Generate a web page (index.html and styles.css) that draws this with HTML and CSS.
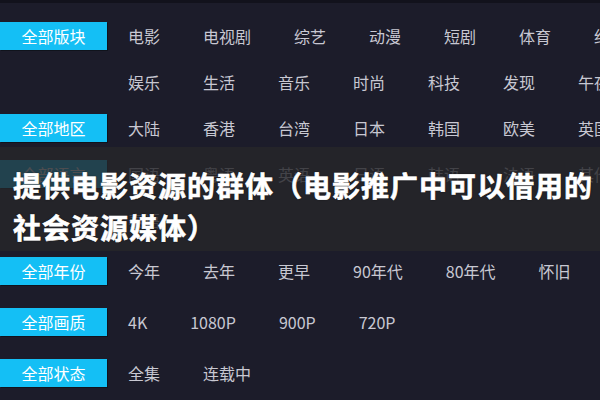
FILE: index.html
```html
<!DOCTYPE html>
<html lang="zh-CN">
<head>
<meta charset="utf-8">
<title>筛选</title>
<link rel="stylesheet" href="styles.css">
</head>
<body>
<div class="page">
  <div class="topbar"></div>
  <div class="filters">
    <div class="row">
      <div class="label">全部版块</div>
      <div class="lines">
        <div class="line"><span>电影</span><span>电视剧</span><span>综艺</span><span>动漫</span><span>短剧</span><span>体育</span><span>纪录片</span></div>
        <div class="line"><span>娱乐</span><span>生活</span><span>音乐</span><span>时尚</span><span>科技</span><span>发现</span><span>午夜</span></div>
      </div>
    </div>
    <div class="row">
      <div class="label">全部地区</div>
      <div class="lines">
        <div class="line"><span>大陆</span><span>香港</span><span>台湾</span><span>日本</span><span>韩国</span><span>欧美</span><span>英国</span></div>
      </div>
    </div>
    <div class="row">
      <div class="label">全部语言</div>
      <div class="lines">
        <div class="line"><span>国语</span><span>粤语</span><span>英语</span><span>日语</span><span>韩语</span><span>法语</span><span>其他</span></div>
        <div class="line"><span>泰语</span></div>
      </div>
    </div>
    <div class="row spaced">
      <div class="label">全部年份</div>
      <div class="lines">
        <div class="line"><span>今年</span><span>去年</span><span>更早</span><span>90年代</span><span>80年代</span><span>怀旧</span></div>
      </div>
    </div>
    <div class="row spaced">
      <div class="label">全部画质</div>
      <div class="lines">
        <div class="line"><span>4K</span><span>1080P</span><span>900P</span><span>720P</span></div>
      </div>
    </div>
    <div class="row spaced">
      <div class="label">全部状态</div>
      <div class="lines">
        <div class="line"><span>全集</span><span>连载中</span></div>
      </div>
    </div>
  </div>
  <div class="banner">
    <h1 class="title"><span class="tline">提供电影资源的群体（电影推广中可以借用的</span><span class="tline">社会资源媒体）</span></h1>
  </div>
</div>
</body>
</html>
```
FILE: styles.css
```css
html, body {
  margin: 0;
  padding: 0;
}
body {
  background: #1c1c2a;
  font-family: "Noto Sans CJK SC", "Noto Sans", sans-serif;
  width: 600px;
  height: 400px;
  overflow: hidden;
}
.page {
  position: relative;
  width: 600px;
  height: 400px;
  overflow: hidden;
}
.topbar {
  height: 3px;
  background: #12121c;
}
.filters {
  padding-top: 10px;
  display: flex;
  flex-direction: column;
}
.row {
  display: flex;
  gap: 21px;
}
.row.spaced {
  margin-top: 5px;
}
.label {
  flex: 0 0 107px;
  height: 28px;
  margin-top: 9px;
  background: #14bff5;
  color: #ffffff;
  font-size: 16px;
  line-height: 28px;
  text-align: center;
  box-shadow: 1px 1px 0 #10131c;
}
.lines {
  display: flex;
  flex-direction: column;
  min-width: 0;
}
.line {
  display: flex;
  gap: 43px;
  height: 46px;
  line-height: 46px;
  font-size: 16px;
  color: #c8c8d2;
  white-space: nowrap;
}
.banner {
  position: absolute;
  left: 0;
  right: 0;
  top: 147px;
  height: 104px;
  background: rgba(38, 38, 42, 0.82);
}
.title {
  margin: 0;
  padding: 17px 0 0 13px;
  font-size: 28px;
  font-weight: 700;
  letter-spacing: 1px;
  line-height: 42px;
  color: #ffffff;
  -webkit-text-stroke: 0.6px #ffffff;
  text-shadow: 0 0 2px rgba(0, 0, 0, 0.6);
}
.tline {
  display: block;
  white-space: nowrap;
}
```
